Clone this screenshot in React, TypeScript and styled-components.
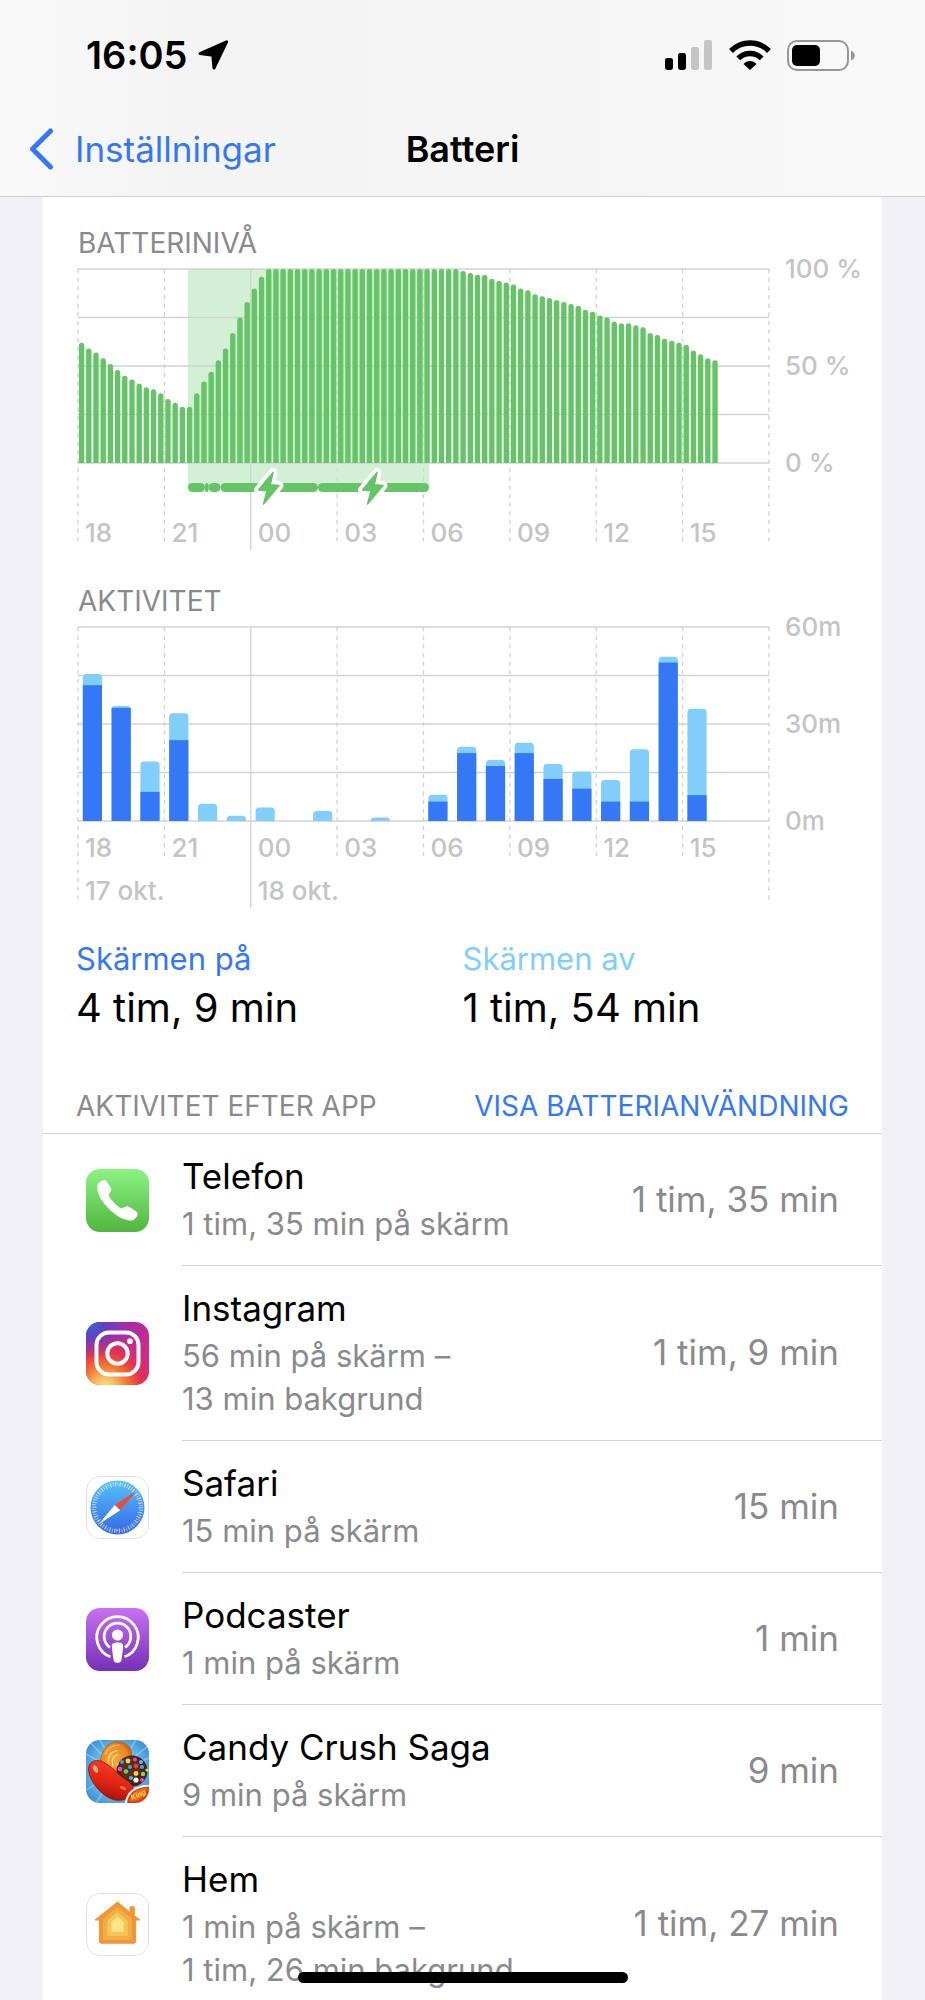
import React from "react";
import styled, { createGlobalStyle } from "styled-components";

const color = {
  blue: "#3478f6",
  sky: "#82cefb",
  green: "#65c466",
  greenTint: "#d3f0d7",
  grid: "#d2d2d4",
  axis: "#c4c4c6",
  secondary: "#8a8a8e",
  page: "#f1f0f6",
};

const GlobalStyle = createGlobalStyle`
  *, *::before, *::after { box-sizing: border-box; }
  body {
    margin: 0;
    background: ${color.page};
    font-family: Inter, "Liberation Sans", sans-serif;
    color: #000;
  }
  h1, h2, h3, p, ul, dl, dd { margin: 0; padding: 0; }
`;

const Screen = styled.div`
  position: relative;
  display: flex;
  flex-direction: column;
  height: 100vh;
  overflow: hidden;
`;

const Header = styled.header`
  flex: none;
  padding: 32px 0 24px;
  border-bottom: 1px solid #cfcfd1;
  background: linear-gradient(90deg, #f9f9f9 0%, #f4f4f4 20%, #f5f5f5 60%, #f9f9f9 100%);
`;

const StatusBar = styled.div`
  display: flex;
  align-items: center;
  justify-content: space-between;
  padding: 0 69px 0 86px;
`;

const StatusGroup = styled.div<{ $gap: number }>`
  display: flex;
  align-items: center;
  gap: ${(p) => p.$gap}px;
`;

const Clock = styled.span`
  font-size: 38px;
  line-height: 46px;
  font-weight: 600;
`;

const NavBar = styled.nav`
  display: grid;
  grid-template-columns: 1fr auto 1fr;
  align-items: center;
  margin-top: 48px;
  padding: 0 28px;
`;

const BackLink = styled.a`
  display: flex;
  align-items: center;
  gap: 20px;
  color: ${color.blue};
  font-size: 35px;
  line-height: 46px;
  text-decoration: none;
`;

const NavTitle = styled.h1`
  font-size: 36px;
  line-height: 46px;
  font-weight: 600;
`;

const Scroller = styled.main`
  flex: 1;
  min-height: 0;
  overflow-y: auto;
  scrollbar-width: none;
  padding: 0 43px;
`;

const Card = styled.div`
  background: #fff;
  padding-top: 29px;
`;

const ChartSection = styled.section`
  margin-bottom: 29px;
  padding-left: 35px;
`;

const Caption = styled.h2`
  color: ${color.secondary};
  font-size: 28px;
  line-height: 34px;
  font-weight: 400;
`;

const Plot = styled.svg`
  display: block;
  width: 100%;
  height: auto;
  overflow: visible;

  text {
    fill: ${color.axis};
    font-size: 26px;
    font-weight: 500;
  }
`;

const Summary = styled.dl`
  display: grid;
  grid-template-columns: 1fr 1fr;
  padding: 2px 33px 0;
`;

const SummaryLabel = styled.dt<{ $tone: string }>`
  color: ${(p) => p.$tone};
  font-size: 31px;
  line-height: 40px;
`;

const SummaryValue = styled.dd`
  margin-top: 3px;
  font-size: 40px;
  line-height: 52px;
`;

const ListHeader = styled.div`
  display: flex;
  justify-content: space-between;
  padding: 55px 33px 10px;
  border-bottom: 1px solid ${color.grid};
`;

const TextButton = styled.button`
  padding: 0;
  border: 0;
  background: none;
  color: ${color.blue};
  font: inherit;
  font-size: 28px;
  line-height: 34px;
`;

const AppList = styled.ul`
  list-style: none;
`;

const AppRow = styled.li`
  display: flex;
  align-items: stretch;
  padding-left: 43px;
`;

const IconCell = styled.div`
  display: flex;
  align-items: center;
  width: 96px;

  svg { display: block; }
`;

const RowBody = styled.div`
  flex: 1;
  display: flex;
  align-items: center;
  justify-content: space-between;
  padding: 18px 43px 20px 0;
  border-bottom: 1px solid ${color.grid};
`;

const AppName = styled.h3`
  margin-bottom: 2px;
  font-size: 35px;
  line-height: 48px;
  font-weight: 400;
`;

const AppDetail = styled.p`
  color: ${color.secondary};
  font-size: 31px;
  line-height: 43px;
`;

const AppTime = styled.span`
  color: ${color.secondary};
  font-size: 35px;
  line-height: 46px;
`;

const HomeIndicator = styled.div`
  position: absolute;
  left: 50%;
  bottom: 17px;
  width: 330px;
  height: 11px;
  margin-left: -165px;
  border-radius: 6px;
  background: #000;
`;

/* ---------- charts ---------- */

const PLOT_W = 691;
const PLOT_H = 194;
const PLOT_Y = 9;
const HOURS = ["18", "21", "00", "03", "06", "09", "12", "15"];
const STEP = PLOT_W / HOURS.length;
const MIDNIGHT = 2;

const LEVELS = [
  62, 59, 57, 54, 51, 48, 45, 43, 41, 39, 38, 36, 33, 31, 29, 29, 36, 42, 47, 53, 59, 67, 75, 83, 90, 96,
  ...Array<number>(27).fill(100),
  99, 98, 97, 97, 95, 94, 93, 92, 90, 89, 87, 86, 85, 84, 83, 82, 81, 79, 78, 76, 75, 73, 72, 72, 71, 70, 67,
  66, 64, 63, 62, 61, 58, 56, 54, 53,
];

const CHARGES: [number, number][] = [
  [110, 127],
  [127, 130.5],
  [130.5, 142.5],
  [142.5, 240],
  [240, 351],
];

/* [total minutes, minutes with the screen on] for each hour */
const ACTIVITY: [number, number][] = [
  [45.5, 42], [35.6, 35], [18.4, 9], [33.3, 25], [5.3, 0], [1.6, 0], [4.2, 0], [0, 0], [3.1, 0], [0, 0],
  [1.1, 0], [0, 0], [8.1, 6], [23, 21], [18.9, 17], [24.2, 21], [17.6, 13], [15.3, 10], [12.7, 6],
  [22.2, 6], [50.8, 49], [34.7, 8],
];

interface GridProps {
  lineEnd: number;
  outerEnd: number;
  midnightEnd: number;
  labelY: number;
  scale: [string, string, string];
}

function Grid({ lineEnd, outerEnd, midnightEnd, labelY, scale }: GridProps) {
  return (
    <g>
      {[0, 1, 2, 3, 4].map((i) => (
        <line key={i} x1="0" x2={PLOT_W} y1={(PLOT_H / 4) * i} y2={(PLOT_H / 4) * i} stroke={color.grid} strokeWidth="1.3" />
      ))}
      {[...HOURS, ""].map((_, i) => {
        const solid = i === MIDNIGHT;
        const outer = i === 0 || i === HOURS.length;
        return (
          <line
            key={i}
            x1={STEP * i}
            x2={STEP * i}
            y1="0"
            y2={solid ? midnightEnd : outer ? outerEnd : lineEnd}
            stroke={color.grid}
            strokeWidth="1.3"
            strokeDasharray={solid ? undefined : "4.3 4.35"}
          />
        );
      })}
      {HOURS.map((h, i) => (
        <text key={h} x={STEP * i + 7} y={labelY}>{h}</text>
      ))}
      {scale.map((s, i) => (
        <text key={s} x={PLOT_W + 16} y={(PLOT_H / 2) * i + 9}>{s}</text>
      ))}
    </g>
  );
}

function Bolt({ x }: { x: number }) {
  const d = "M4 -15.5 L-10.5 2 L-1.8 2.8 L-5.5 16 L10 -2.5 L1.3 -3.2 Z";
  return (
    <g transform={`translate(${x} 219)`} strokeLinejoin="round">
      <path d={d} fill="#fff" stroke="#fff" strokeWidth="9" />
      <path d={d} fill={color.green} stroke={color.green} strokeWidth="1.5" />
    </g>
  );
}

function BatteryChart() {
  const pitch = STEP / 12;
  return (
    <Plot viewBox="0 0 804 295" role="img" aria-label="Batterinivå">
      <g transform={`translate(0 ${PLOT_Y})`}>
        <rect x="110" y="0" width="241" height="218" fill={color.greenTint} />
        <Grid lineEnd={276} outerEnd={276} midnightEnd={281} labelY={273} scale={["100 %", "50 %", "0 %"]} />
        {LEVELS.map((v, i) => {
          const x = pitch * i + 0.9;
          const top = PLOT_H * (1 - v / 100);
          return (
            <path
              key={i}
              d={`M${x} ${PLOT_H} V${top + 2.7} a2.7 2.7 0 0 1 5.4 0 V${PLOT_H} Z`}
              fill={color.green}
            />
          );
        })}
        {CHARGES.map(([a, b]) => (
          <rect key={a} x={a} y="214" width={b - a} height="9" rx={Math.min(4.5, (b - a) / 2)} fill={color.green} />
        ))}
        <Bolt x={191} />
        <Bolt x={295} />
      </g>
    </Plot>
  );
}

function ActivityChart() {
  const pitch = STEP / 3;
  return (
    <Plot viewBox="0 0 804 290" role="img" aria-label="Aktivitet">
      <g transform={`translate(0 ${PLOT_Y})`}>
        <Grid lineEnd={233} outerEnd={277} midnightEnd={281} labelY={230} scale={["60m", "30m", "0m"]} />
        <text x="7" y="273">17 okt.</text>
        <text x={STEP * MIDNIGHT + 7} y="273">18 okt.</text>
        {ACTIVITY.map(([total, on], i) => {
          if (!total) return null;
          const x = pitch * i + 4.8;
          const h = (total / 60) * PLOT_H;
          const r = Math.min(3.5, h);
          const onH = (on / 60) * PLOT_H;
          return (
            <g key={i}>
              <path
                d={`M${x} ${PLOT_H} V${PLOT_H - h + r} q0 ${-r} ${r} ${-r} h${19.2 - 2 * r} q${r} 0 ${r} ${r} V${PLOT_H} Z`}
                fill={color.sky}
              />
              <rect x={x} y={PLOT_H - onH} width="19.2" height={onH} fill={color.blue} />
            </g>
          );
        })}
      </g>
    </Plot>
  );
}

/* ---------- status icons ---------- */

function LocationArrow() {
  return (
    <svg width="31" height="30" viewBox="0 0 31 30" aria-hidden="true">
      <path d="M28.6 1.8 L2 13.6 L14.8 15.3 L16 28 Z" stroke="#000" strokeWidth="3" strokeLinejoin="round" />
    </svg>
  );
}

function Signal() {
  return (
    <svg width="48" height="30" viewBox="0 0 48 30" aria-hidden="true">
      <rect x="0" y="18" width="8" height="12" rx="2.4" />
      <rect x="13" y="13" width="8" height="17" rx="2.4" />
      <rect x="26" y="7" width="8" height="23" rx="2.4" fill="#c5c5c5" />
      <rect x="39" y="0" width="8" height="30" rx="2.4" fill="#c5c5c5" />
    </svg>
  );
}

function Wifi() {
  return (
    <svg width="42" height="30" viewBox="0 0 42 30" aria-hidden="true">
      <g fill="none" stroke="#000" strokeWidth="5.4">
        <path d="M2 11 A26.5 26.5 0 0 1 40 11" />
        <path d="M9.3 18.4 A16.5 16.5 0 0 1 32.7 18.4" />
      </g>
      <path d="M14.5 24 C18 20 24 20 27.5 24 L21.6 29.6 Q21 30.1 20.4 29.6 Z" />
    </svg>
  );
}

function Battery() {
  return (
    <svg width="69" height="31" viewBox="0 0 69 31" aria-hidden="true">
      <rect x="1" y="1" width="60" height="29" rx="9" fill="none" stroke="#979797" strokeWidth="2" />
      <rect x="5" y="5" width="28" height="21" rx="5" />
      <path d="M64 10.5 C69 12.5 69 18.5 64 20.5 Z" fill="#979797" />
    </svg>
  );
}

function ChevronBack() {
  return (
    <svg width="27" height="42" viewBox="0 0 27 42" aria-hidden="true">
      <path d="M22.5 3 L4.5 21 L22.5 39" fill="none" stroke={color.blue} strokeWidth="5" strokeLinecap="round" strokeLinejoin="round" />
    </svg>
  );
}

/* ---------- app icons, each on a 63 unit tile ---------- */

function Tile({ children, clip }: { children: React.ReactNode; clip: string }) {
  return (
    <svg width="63" height="63" viewBox="0 0 63 63" aria-hidden="true">
      <clipPath id={clip}>
        <rect width="63" height="63" rx="14" />
      </clipPath>
      <g clipPath={`url(#${clip})`}>{children}</g>
    </svg>
  );
}

function PhoneIcon() {
  return (
    <Tile clip="phone-tile">
      <linearGradient id="phone-bg" x1="0" y1="0" x2="0" y2="1">
        <stop offset="0" stopColor="#8cf383" />
        <stop offset="1" stopColor="#51b53f" />
      </linearGradient>
      <rect width="63" height="63" fill="url(#phone-bg)" />
      <path
        fill="#fff"
        d="M12 15 C13.5 13 16.5 10.5 18.7 10.7 C19.8 10.9 24.8 18.4 25.4 20 C25.9 21.8 23 24.3 22.8 26.3 C23 29.5 31.5 37.8 34.7 38.9 C36.7 39.3 39.7 37 41.6 37.2 C43.6 37.6 50.8 42.4 51.6 44 C52.3 46 49.7 50.2 46.6 51.3 C42 52.5 34 49.6 27 43.6 C18.5 36.4 11.5 27 11.2 18.5 C11.1 17 11.3 16 12 15 Z"
      />
    </Tile>
  );
}

function InstagramIcon() {
  return (
    <Tile clip="insta-tile">
      <linearGradient id="insta-base" x1="0" y1="0" x2="1" y2="0.7">
        <stop offset="0" stopColor="#6a3ac0" />
        <stop offset="0.5" stopColor="#a92ba6" />
        <stop offset="1" stopColor="#dc2c7c" />
      </linearGradient>
      <radialGradient id="insta-warm" cx="0.3" cy="1.05" r="0.95">
        <stop offset="0" stopColor="#fbdc80" />
        <stop offset="0.15" stopColor="#f9c765" />
        <stop offset="0.4" stopColor="#f2702f" />
        <stop offset="0.6" stopColor="#e6334f" />
        <stop offset="0.8" stopColor="#d62b78" stopOpacity="0.7" />
        <stop offset="1" stopColor="#b32ba0" stopOpacity="0" />
      </radialGradient>
      <radialGradient id="insta-cool" cx="0.08" cy="0.03" r="0.55">
        <stop offset="0" stopColor="#3b62d8" />
        <stop offset="0.4" stopColor="#5345c8" stopOpacity="0.8" />
        <stop offset="1" stopColor="#8030b8" stopOpacity="0" />
      </radialGradient>
      <rect width="63" height="63" fill="url(#insta-base)" />
      <rect width="63" height="63" fill="url(#insta-warm)" />
      <rect width="63" height="63" fill="url(#insta-cool)" />
      <g fill="none" stroke="#fff" strokeWidth="4">
        <rect x="10.5" y="10.5" width="42" height="42" rx="12.5" />
        <circle cx="31.5" cy="31.5" r="10.2" />
      </g>
      <circle cx="44" cy="19.2" r="2.9" fill="#fff" />
    </Tile>
  );
}

function SafariIcon() {
  return (
    <Tile clip="safari-tile">
      <linearGradient id="safari-bg" x1="0" y1="0" x2="0" y2="1">
        <stop offset="0" stopColor="#57c1f5" />
        <stop offset="1" stopColor="#3567ea" />
      </linearGradient>
      <rect x="0.5" y="0.5" width="62" height="62" rx="13.5" fill="#fff" stroke="#e0e0e2" />
      <circle cx="31.5" cy="31.5" r="27" fill="url(#safari-bg)" />
      <circle cx="31.5" cy="31.5" r="23.7" fill="none" stroke="#fff" strokeOpacity="0.6" strokeWidth="4" pathLength="360" strokeDasharray="2 4" />
      <circle cx="31.5" cy="31.5" r="22.7" fill="none" stroke="#fff" strokeOpacity="0.6" strokeWidth="4" pathLength="360" strokeDasharray="2 10" />
      <path d="M50.5 15 L28.7 29 L34.2 34.3 Z" fill="#ee4b3c" />
      <path d="M12.8 48.3 L28.7 29 L34.2 34.3 Z" fill="#fff" />
    </Tile>
  );
}

function PodcastIcon() {
  return (
    <Tile clip="pod-tile">
      <linearGradient id="pod-bg" x1="0" y1="0" x2="0" y2="1">
        <stop offset="0" stopColor="#c970f3" />
        <stop offset="1" stopColor="#7430b6" />
      </linearGradient>
      <rect width="63" height="63" fill="url(#pod-bg)" />
      <g fill="none" stroke="#fff" strokeWidth="2.8">
        <path d="M24.5 48.8 A20.7 20.7 0 1 1 38.5 48.8" />
        <path d="M24 39.4 A13.3 13.3 0 1 1 39 39.4" />
      </g>
      <circle cx="31.5" cy="27" r="5.6" fill="#fff" />
      <path d="M31.5 34.6 C35.5 34.6 37.3 35.6 37.1 38.6 C36.9 43 36 49 35.3 52.3 C34.7 55.8 28.3 55.8 27.7 52.3 C27 49 26.1 43 25.9 38.6 C25.7 35.6 27.5 34.6 31.5 34.6 Z" fill="#fff" />
    </Tile>
  );
}

const SPRINKLES: [number, number, number, string][] = [
  [36, 22, 1.9, "#35a8f0"], [42, 21, 2.4, "#f4dc3a"], [49, 19.5, 2, "#e046c8"], [55, 22, 2, "#46c8f0"],
  [34, 29, 2.3, "#d948e8"], [40, 31.5, 2.3, "#63d83c"], [44, 27, 2, "#32a6f2"], [50, 26, 2.4, "#ee3b30"],
  [56, 27, 2.1, "#3aa4f5"], [50, 33.5, 2.4, "#f4d738"], [57, 34, 2.2, "#7ede46"], [45, 38, 2.1, "#36b6f5"],
  [50, 40, 2.6, "#f4f4f4"], [56, 40, 2, "#e848b4"], [31, 24, 1.7, "#b6de46"], [61, 30, 1.6, "#f4dc3a"],
];

function CandyIcon() {
  return (
    <Tile clip="candy-tile">
      <radialGradient id="candy-bg" cx="0.5" cy="0.5" r="0.7">
        <stop offset="0" stopColor="#c9effc" />
        <stop offset="0.55" stopColor="#63b7ec" />
        <stop offset="1" stopColor="#3282ca" />
      </radialGradient>
      <linearGradient id="candy-bean" x1="0.6" y1="0" x2="0.3" y2="1">
        <stop offset="0" stopColor="#f5402a" />
        <stop offset="0.55" stopColor="#e02412" />
        <stop offset="1" stopColor="#9c1208" />
      </linearGradient>
      <radialGradient id="candy-drop" cx="0.45" cy="0.5" r="0.6">
        <stop offset="0" stopColor="#f9a63c" />
        <stop offset="0.7" stopColor="#ee8a22" />
        <stop offset="1" stopColor="#c95c10" />
      </radialGradient>
      <rect width="63" height="63" fill="url(#candy-bg)" />
      <g stroke="#a5dcf8" strokeWidth="1.4" opacity="0.6">
        <path d="M31 31 L4 2 M31 31 L14 0 M31 31 L50 0 M31 31 L62 6 M31 31 L0 50 M31 31 L10 63 M31 31 L0 14 M31 31 L63 18" />
      </g>
      <path d="M14 24 C15 10 22 2 31 2 C42 2 47 9 45 17 C43 26 34 36 26 36 C18 36 13 31 14 24 Z" fill="url(#candy-drop)" stroke="#b4540f" strokeWidth="0.8" />
      <g fill="none" strokeLinecap="round">
        <path d="M22 23 C22 15 26 11 31 11 M27 26 C25 19 28 15 32 15" stroke="#fde0a0" strokeWidth="1.2" />
        <path d="M19 14 C22 8 27 5 33 5" stroke="#fbc06a" strokeWidth="1.2" />
      </g>
      <circle cx="46" cy="31" r="15.5" fill="#4a2013" />
      <circle cx="44" cy="28" r="11" fill="#653020" opacity="0.7" />
      {SPRINKLES.map(([x, y, r, fill]) => (
        <circle key={`${x}-${y}`} cx={x} cy={y} r={r} fill={fill} />
      ))}
      <path
        d="M2.5 30 C2 22 9 19 15 21 C22 23.5 29 31 36 37 C42 41 48 44 47 51 C46 58 38 61.5 29 60 C17 57.5 4 43 2.5 30 Z"
        fill="url(#candy-bean)"
        stroke="#8d1409"
        strokeWidth="0.8"
      />
      <ellipse cx="9.5" cy="29" rx="2.3" ry="4" fill="#ff9f8d" transform="rotate(-25 9.5 29)" />
      <ellipse cx="37" cy="48" rx="3.4" ry="1.5" fill="#f8705c" transform="rotate(25 37 48)" />
      <path d="M39 64 C39 53 48 44.5 64 45 V64 Z" fill="#fff" />
      <path d="M41 64 C41 54 49 47 64 46.5 V64 Z" fill="#d8431a" />
      <path d="M43.5 61 C46 51 54 48 61 48 C60 56 54 62 43.5 61 Z" fill="#f06a1c" />
      <text x="46" y="60" fill="#ffd94a" fontSize="7" fontWeight="700" fontStyle="italic" transform="rotate(-24 46 60)">King</text>
    </Tile>
  );
}

function HomeIcon() {
  return (
    <Tile clip="home-tile">
      <rect x="0.5" y="0.5" width="62" height="62" rx="13.5" fill="#fff" stroke="#e0e0e2" />
      <path
        d="M31.5 9 L44 19.4 V14.5 Q44 13.8 44.7 13.8 H47.6 Q48.3 13.8 48.3 14.5 V22.8 L54 27 H49.6 V48.5 Q49.6 50.2 48 50.2 H15 Q13.4 50.2 13.4 48.5 V27 H9 Z"
        fill="#ee9638"
        stroke="#ee9638"
        strokeWidth="1"
        strokeLinejoin="round"
      />
      <path d="M31.5 14.5 L45.6 26 V46.5 H17.4 V26 Z" fill="#f4ac45" stroke="#f4ac45" strokeLinejoin="round" />
      <path d="M31.5 19.5 L41.3 27.8 V42.5 H21.7 V27.8 Z" fill="#f7c457" stroke="#f7c457" strokeLinejoin="round" />
      <path d="M31.5 24 L37.2 29 V38.3 H25.8 V29 Z" fill="#fae587" stroke="#fae587" strokeLinejoin="round" />
    </Tile>
  );
}

/* ---------- page ---------- */

const APPS = [
  { name: "Telefon", details: ["1 tim, 35 min på skärm"], time: "1 tim, 35 min", Icon: PhoneIcon },
  { name: "Instagram", details: ["56 min på skärm –", "13 min bakgrund"], time: "1 tim, 9 min", Icon: InstagramIcon },
  { name: "Safari", details: ["15 min på skärm"], time: "15 min", Icon: SafariIcon },
  { name: "Podcaster", details: ["1 min på skärm"], time: "1 min", Icon: PodcastIcon },
  { name: "Candy Crush Saga", details: ["9 min på skärm"], time: "9 min", Icon: CandyIcon },
  { name: "Hem", details: ["1 min på skärm –", "1 tim, 26 min bakgrund"], time: "1 tim, 27 min", Icon: HomeIcon },
];

export default function App() {
  return (
    <Screen lang="sv">
      <GlobalStyle />
      <Header>
        <StatusBar>
          <StatusGroup $gap={11}>
            <Clock>16:05</Clock>
            <LocationArrow />
          </StatusGroup>
          <StatusGroup $gap={16}>
            <Signal />
            <Wifi />
            <Battery />
          </StatusGroup>
        </StatusBar>
        <NavBar>
          <BackLink href="#installningar">
            <ChevronBack />
            Inställningar
          </BackLink>
          <NavTitle>Batteri</NavTitle>
        </NavBar>
      </Header>
      <Scroller>
        <Card>
          <ChartSection>
            <Caption>BATTERINIVÅ</Caption>
            <BatteryChart />
          </ChartSection>
          <ChartSection>
            <Caption>AKTIVITET</Caption>
            <ActivityChart />
          </ChartSection>
          <Summary>
            <div>
              <SummaryLabel $tone={color.blue}>Skärmen på</SummaryLabel>
              <SummaryValue>4 tim, 9 min</SummaryValue>
            </div>
            <div>
              <SummaryLabel $tone={color.sky}>Skärmen av</SummaryLabel>
              <SummaryValue>1 tim, 54 min</SummaryValue>
            </div>
          </Summary>
          <ListHeader>
            <Caption>AKTIVITET EFTER APP</Caption>
            <TextButton type="button">VISA BATTERIANVÄNDNING</TextButton>
          </ListHeader>
          <AppList>
            {APPS.map(({ name, details, time, Icon }) => (
              <AppRow key={name}>
                <IconCell>
                  <Icon />
                </IconCell>
                <RowBody>
                  <div>
                    <AppName>{name}</AppName>
                    {details.map((d) => (
                      <AppDetail key={d}>{d}</AppDetail>
                    ))}
                  </div>
                  <AppTime>{time}</AppTime>
                </RowBody>
              </AppRow>
            ))}
          </AppList>
        </Card>
      </Scroller>
      <HomeIndicator />
    </Screen>
  );
}
